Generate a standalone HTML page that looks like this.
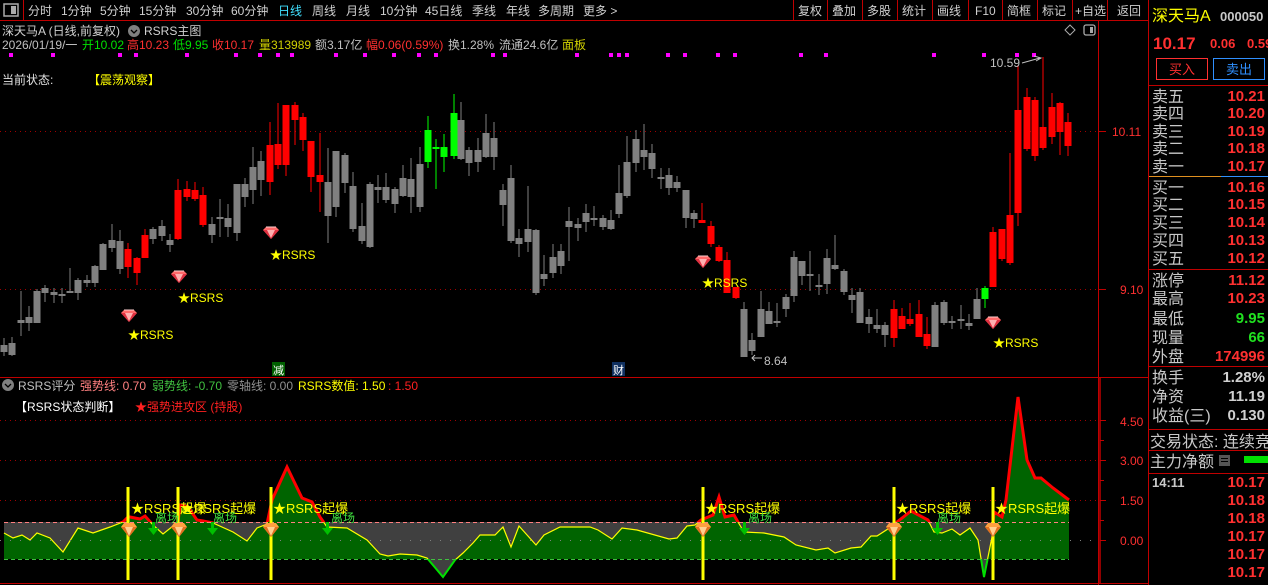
<!DOCTYPE html>
<html><head><meta charset="utf-8">
<style>
html,body{margin:0;padding:0;background:#000;width:1268px;height:585px;overflow:hidden}
svg{display:block}
text{font-family:"Liberation Sans","Noto Sans CJK SC",sans-serif}
</style></head><body>
<svg id="s" width="1268" height="585" xmlns="http://www.w3.org/2000/svg">
<defs>
<clipPath id="above"><rect x="0" y="0" width="1098" height="522"/></clipPath>
<clipPath id="mid"><rect x="0" y="522" width="1098" height="37"/></clipPath>
<clipPath id="aboveBase"><rect x="0" y="378" width="1098" height="181"/></clipPath>
<clipPath id="belowBase"><rect x="0" y="559" width="1098" height="30"/></clipPath>
<clipPath id="yel"><rect x="0" y="522" width="1098" height="63"/></clipPath>
<g id="gem"><polygon points="-8,-3 -5,-6 5,-6 8,-3 0,6" fill="#ff6a6a"/><polygon points="-8,-3 8,-3 0,6" fill="#e03040"/><polygon points="-4,-3 4,-3 0,5" fill="#ffb0b0"/><line x1="-5" y1="-6" x2="5" y2="-6" stroke="#ffd0d0"/></g>
<g id="gemo"><polygon points="-8,-3 -5,-7 5,-7 8,-3 0,7" fill="#ffa040"/><polygon points="-8,-3 8,-3 0,7" fill="#e07020"/><polygon points="-4,-3 4,-3 0,6" fill="#ffd090"/></g>
</defs>
<!-- frame lines -->
<line x1="0" y1="20.5" x2="1149" y2="20.5" stroke="#c00000"/>
<line x1="23.5" y1="0" x2="23.5" y2="20" stroke="#c00000"/>
<line x1="1098.5" y1="20" x2="1098.5" y2="585" stroke="#c00000"/>
<line x1="1148.5" y1="0" x2="1148.5" y2="585" stroke="#c00000"/>
<line x1="0" y1="377.5" x2="1148" y2="377.5" stroke="#c00000"/>
<line x1="0" y1="583.5" x2="1148" y2="583.5" stroke="#c00000"/>
<line x1="1100" y1="378" x2="1100" y2="583" stroke="#c00000" stroke-width="1.5"/>
<!-- toolbar -->
<rect x="4" y="4" width="14" height="12" fill="none" stroke="#aaa" stroke-width="1.5"/><rect x="11" y="6" width="5" height="8" fill="#aaa"/>
<g font-size="12" fill="#d0d0d0">
<text x="28" y="15">分时</text><text x="61" y="15">1分钟</text><text x="100" y="15">5分钟</text><text x="139" y="15">15分钟</text><text x="186" y="15">30分钟</text><text x="231" y="15">60分钟</text><text x="278" y="15" fill="#40e0ff">日线</text><text x="312" y="15">周线</text><text x="346" y="15">月线</text><text x="380" y="15">10分钟</text><text x="425" y="15">45日线</text><text x="472" y="15">季线</text><text x="506" y="15">年线</text><text x="538" y="15">多周期</text><text x="583" y="15">更多 &gt;</text>
<text x="798" y="15">复权</text><text x="832" y="15">叠加</text><text x="867" y="15">多股</text><text x="902" y="15">统计</text><text x="937" y="15">画线</text><text x="975" y="15">F10</text><text x="1007" y="15">简框</text><text x="1042" y="15">标记</text><text x="1075" y="15">+自选</text><text x="1117" y="15">返回</text>
</g>
<g stroke="#c00000"><line x1="793.5" y1="0" x2="793.5" y2="20"/><line x1="827.5" y1="0" x2="827.5" y2="20"/><line x1="862.5" y1="0" x2="862.5" y2="20"/><line x1="897.5" y1="0" x2="897.5" y2="20"/><line x1="932.5" y1="0" x2="932.5" y2="20"/><line x1="968.5" y1="0" x2="968.5" y2="20"/><line x1="1002.5" y1="0" x2="1002.5" y2="20"/><line x1="1037.5" y1="0" x2="1037.5" y2="20"/><line x1="1072.5" y1="0" x2="1072.5" y2="20"/><line x1="1107.5" y1="0" x2="1107.5" y2="20"/></g>
<!-- info lines -->
<g font-size="12">
<text x="2" y="35" fill="#d0d0d0">深天马A (日线,前复权)</text>
<circle cx="134" cy="31" r="6" fill="#808080"/><path d="M131 30 L134 33 L137 30" stroke="#000" stroke-width="1.3" fill="none"/>
<text x="144" y="35" fill="#d0d0d0">RSRS主图</text>
<text x="2" y="49" fill="#c0c0c0">2026/01/19/一</text>
<text x="82" y="49" fill="#00e000">开10.02</text>
<text x="127" y="49" fill="#ff3030">高10.23</text>
<text x="173" y="49" fill="#00e000">低9.95</text>
<text x="212" y="49" fill="#ff3030">收10.17</text>
<text x="259" y="49" fill="#d0d000">量313989</text>
<text x="315" y="49" fill="#c0c0c0">额3.17亿</text>
<text x="366" y="49" fill="#ff3030">幅0.06(0.59%)</text>
<text x="448" y="49" fill="#c0c0c0">换1.28%</text>
<text x="499" y="49" fill="#c0c0c0">流通24.6亿</text>
<text x="562" y="49" fill="#d0d000">面板</text>
<text x="2" y="84" fill="#e0e0e0">当前状态:</text>
<text x="88" y="84" fill="#ffff00">【震荡观察】</text>
</g>
<path d="M1070 25 L1075 30 L1070 35 L1065 30 Z" fill="none" stroke="#aaa"/>
<rect x="1084" y="25" width="11" height="10" rx="2" fill="none" stroke="#aaa" stroke-width="1.3"/><rect x="1090" y="27" width="3" height="6" fill="#aaa"/>
<!-- grid -->
<g stroke="#a00000" stroke-dasharray="1,4"><line x1="0" y1="131.5" x2="1098" y2="131.5"/><line x1="0" y1="289.5" x2="1098" y2="289.5"/>
<line x1="0" y1="420.5" x2="1098" y2="420.5"/><line x1="0" y1="460.5" x2="1098" y2="460.5"/><line x1="0" y1="500.5" x2="1098" y2="500.5"/></g>
<g font-size="12" fill="#ff3030">
<text x="1112" y="136">10.11</text><text x="1120" y="294">9.10</text>
<text x="1120" y="426">4.50</text><text x="1120" y="465">3.00</text><text x="1120" y="505">1.50</text><text x="1120" y="545">0.00</text>
</g>
<g stroke="#c00000"><line x1="1099" y1="131.5" x2="1106" y2="131.5"/><line x1="1099" y1="289.5" x2="1106" y2="289.5"/><line x1="1100" y1="420.5" x2="1106" y2="420.5"/><line x1="1100" y1="460.5" x2="1106" y2="460.5"/><line x1="1100" y1="500.5" x2="1106" y2="500.5"/><line x1="1100" y1="540.5" x2="1106" y2="540.5"/><line x1="1100" y1="440.5" x2="1104" y2="440.5"/><line x1="1100" y1="480.5" x2="1104" y2="480.5"/><line x1="1100" y1="520.5" x2="1104" y2="520.5"/></g>
<g id="candles"></g>
<g id="dots" fill="#ff00ff"></g>
<!-- labels main -->
<g font-size="12" fill="#c0c0c0"><text x="990" y="67">10.59</text><path d="M1022 63 L1040 58 M1034 56 L1041 58 L1036 61" stroke="#c0c0c0" fill="none"/>
<path d="M752 358 L762 358 M755 355 L752 358 L755 361" stroke="#c0c0c0" fill="none"/><text x="764" y="365">8.64</text></g>
<use href="#gem" x="129" y="316"/><use href="#gem" x="179" y="277"/><use href="#gem" x="271" y="233"/><use href="#gem" x="703" y="262"/><use href="#gem" x="993" y="323"/>
<g font-size="12" fill="#ffff00"><text x="128" y="339">★RSRS</text><text x="178" y="302">★RSRS</text><text x="270" y="259">★RSRS</text><text x="702" y="287">★RSRS</text><text x="993" y="347">★RSRS</text></g>
<rect x="272" y="362" width="13" height="14" fill="#006000"/><text x="273" y="374" font-size="11" fill="#fff">减</text>
<rect x="612" y="362" width="13" height="14" fill="#103060"/><text x="613" y="374" font-size="11" fill="#fff">财</text>
<!-- indicator header -->
<circle cx="8" cy="385" r="6" fill="#808080"/><path d="M5 384 L8 387 L11 384" stroke="#000" stroke-width="1.3" fill="none"/>
<g font-size="12"><text x="18" y="390" fill="#c0c0c0">RSRS评分</text><text x="80" y="390" fill="#ff8080">强势线: 0.70</text><text x="152" y="390" fill="#40c040">弱势线: -0.70</text><text x="227" y="390" fill="#909090">零轴线: 0.00</text><text x="298" y="390" fill="#ffff00">RSRS数值: 1.50</text><text x="388" y="390" fill="#ff2020">: 1.50</text>
<text x="15" y="411" fill="#fff">【RSRS状态判断】</text><text x="135" y="411" fill="#ff2020">★强势进攻区 (持股)</text></g>
<!-- indicator -->
<rect x="4" y="522" width="1065" height="37" fill="#404040"/>
<g id="ind"></g>
<line x1="4" y1="522.5" x2="1069" y2="522.5" stroke="#ff8080" stroke-dasharray="4,3"/>
<line x1="0" y1="540.5" x2="1098" y2="540.5" stroke="#808080" stroke-dasharray="1,9"/>
<line x1="4" y1="559.5" x2="1069" y2="559.5" stroke="#40c040" stroke-dasharray="4,3"/>
<g stroke="#ffff00" stroke-width="3"><line x1="128" y1="487" x2="128" y2="580"/><line x1="178" y1="487" x2="178" y2="580"/><line x1="271" y1="487" x2="271" y2="580"/><line x1="703" y1="487" x2="703" y2="580"/><line x1="894" y1="487" x2="894" y2="580"/><line x1="993" y1="487" x2="993" y2="580"/></g>
<use href="#gemo" x="129" y="530"/><use href="#gemo" x="179" y="530"/><use href="#gemo" x="271" y="530"/><use href="#gemo" x="703" y="530"/><use href="#gemo" x="894" y="530"/><use href="#gemo" x="993" y="530"/>
<g font-size="13" fill="#ffff00"><text x="131" y="513">★RSRS起爆</text><text x="181" y="513">★RSRS起爆</text><text x="273" y="513">★RSRS起爆</text><text x="705" y="513">★RSRS起爆</text><text x="896" y="513">★RSRS起爆</text><text x="995" y="513">★RSRS起爆</text></g>
<g font-size="12" fill="#40e040"><text x="155" y="522">离场</text><text x="213" y="522">离场</text><text x="331" y="522">离场</text><text x="748" y="522">离场</text><text x="937" y="522">离场</text></g>
<g fill="#00c000" id="arr"></g>
<!-- right panel -->
<text x="1152" y="21" font-size="16" fill="#ffff00">深天马A</text><text x="1220" y="21" font-size="13" fill="#c8c8c8" font-weight="bold">000050</text>
<text x="1153" y="49" font-size="17" fill="#ff3030" font-weight="bold">10.17</text><text x="1210" y="48" font-size="13" fill="#ff3030" font-weight="bold">0.06</text><text x="1247" y="48" font-size="13" fill="#ff3030" font-weight="bold">0.59</text>
<rect x="1156.5" y="58.5" width="51" height="21" fill="none" stroke="#ff3030"/><text x="1169" y="74" font-size="13" fill="#ff3030">买入</text>
<rect x="1213.5" y="58.5" width="51" height="21" fill="none" stroke="#3090ff"/><text x="1226" y="74" font-size="13" fill="#3090ff">卖出</text>
<g stroke="#c00000"><line x1="1149" y1="85.5" x2="1268" y2="85.5"/><line x1="1149" y1="269.5" x2="1268" y2="269.5"/><line x1="1149" y1="366.5" x2="1268" y2="366.5"/><line x1="1149" y1="429.5" x2="1268" y2="429.5"/><line x1="1149" y1="450.5" x2="1268" y2="450.5"/><line x1="1149" y1="473.5" x2="1268" y2="473.5"/></g>
<line x1="1149" y1="176.5" x2="1221" y2="176.5" stroke="#e09020"/><line x1="1221" y1="176.5" x2="1268" y2="176.5" stroke="#3090ff"/>
<g font-size="16" fill="#c8c8c8" id="rl"></g>
<g font-size="15" fill="#ff3030" font-weight="bold" text-anchor="end" id="rv"></g>
<text x="1150" y="447" font-size="16" fill="#c8c8c8">交易状态: 连续竞</text>
<text x="1150" y="467" font-size="16" fill="#c8c8c8">主力净额</text><rect x="1219" y="455" width="11" height="11" fill="#555"/><g stroke="#000"><line x1="1221" y1="458.5" x2="1228" y2="458.5"/><line x1="1221" y1="461.5" x2="1228" y2="461.5"/></g>
<rect x="1244" y="456" width="24" height="7" fill="#00e000"/>
<text x="1152" y="487" font-size="13" fill="#c8c8c8" font-weight="bold">14:11</text>
</svg>
<script>
var NS="http://www.w3.org/2000/svg";
function el(p,t,a){var e=document.createElementNS(NS,t);for(var k in a)e.setAttribute(k,a[k]);p.appendChild(e);return e;}
var C=[[4,345,352,338,356,'g'],[12,343,355,337,356,'g'],[21,320,323,291,336,'g'],[29,317,323,306,331,'g'],[37,291,323,289,323,'g'],[45,288,293,285,302,'g'],[54,292,295,288,303,'g'],[62,294,296,288,303,'g'],[70,291,293,268,293,'g'],[78,280,293,278,300,'g'],[87,280,283,275,287,'g'],[95,266,283,265,287,'g'],[103,244,270,243,270,'g'],[112,240,248,224,252,'g'],[120,241,269,230,274,'g'],[128,249,267,243,278,'r'],[137,258,273,257,285,'r'],[145,235,258,229,258,'r'],[153,229,239,227,244,'g'],[162,226,236,220,241,'g'],[170,240,245,234,252,'g'],[178,190,239,179,240,'r'],[187,189,197,181,201,'r'],[195,190,199,182,201,'r'],[203,195,225,187,227,'r'],[212,224,235,217,243,'g'],[220,217,219,199,237,'g'],[228,218,227,204,237,'g'],[237,184,233,184,241,'g'],[245,184,197,178,207,'g'],[253,167,190,147,204,'g'],[261,161,180,151,196,'g'],[270,145,182,122,195,'r'],[278,144,165,103,169,'r'],[286,105,165,105,176,'r'],[295,105,120,102,145,'r'],[303,117,140,113,151,'r'],[311,141,177,141,192,'r'],[320,175,182,133,212,'r'],[328,182,216,148,243,'g'],[336,151,207,151,217,'g'],[345,155,183,153,193,'g'],[353,186,229,172,232,'g'],[362,226,241,203,244,'g'],
[370,184,247,182,248,'g'],[378,187,190,175,203,'g'],[386,187,200,173,203,'g'],[395,189,204,187,213,'g'],[403,178,196,165,197,'g'],[411,179,197,158,213,'g'],[420,164,207,147,212,'g'],[428,130,162,116,168,'G'],[436,147,149,139,189,'G'],[444,147,157,134,172,'G'],[454,113,156,94,159,'G'],[461,120,159,102,160,'g'],[469,150,163,147,176,'g'],[478,150,162,138,172,'g'],[486,133,157,114,158,'g'],[494,138,157,122,170,'g'],[503,190,205,184,226,'g'],[511,178,241,165,243,'g'],[519,238,244,229,257,'g'],[528,229,242,186,252,'g'],[536,230,293,229,295,'g'],[544,274,279,255,286,'g'],[553,257,273,244,278,'g'],[561,251,266,244,274,'g'],[569,221,227,207,261,'g'],[578,224,228,218,241,'g'],[586,213,222,204,232,'g'],[594,218,220,206,226,'g'],[603,218,227,215,230,'g'],[611,220,229,210,230,'g'],[619,193,214,165,218,'g'],[627,162,196,136,198,'g'],[636,139,163,130,172,'g'],[644,150,157,124,170,'g'],[652,153,169,144,178,'g'],[661,177,179,168,189,'g'],[669,175,188,168,195,'g'],[677,182,188,176,192,'g'],[686,190,218,190,228,'g'],[694,213,219,210,228,'g'],[702,220,223,203,223,'r'],[711,226,244,221,247,'r'],[719,247,261,245,262,'r'],
[727,260,293,252,293,'r'],[736,287,298,287,299,'r'],[744,309,357,302,357,'g'],[752,340,351,333,355,'g'],[761,309,337,291,337,'g'],[769,311,324,302,324,'g'],[777,321,323,303,327,'g'],[786,297,309,294,317,'g'],[794,257,296,251,302,'g'],[802,261,276,261,285,'g'],[810,274,276,251,291,'g'],[819,285,287,274,295,'g'],[827,258,284,249,294,'g'],[835,265,269,235,270,'g'],[844,271,292,269,295,'g'],[852,295,300,288,313,'g'],[860,292,323,288,323,'g'],[869,317,324,309,333,'g'],[877,325,329,309,333,'g'],[885,325,335,322,347,'g'],[894,309,338,300,347,'r'],[902,316,329,308,329,'r'],[910,319,324,303,326,'r'],[919,314,337,300,337,'r'],[927,334,346,317,349,'r'],[935,305,347,302,347,'g'],[944,302,323,300,325,'g'],[952,321,323,316,329,'g'],[961,319,321,305,329,'g'],[969,323,326,314,330,'g'],[977,299,319,288,319,'g'],[985,288,299,286,308,'G'],[993,232,287,227,287,'r'],[1002,229,259,229,261,'r'],[1010,215,263,153,265,'r'],[1018,110,213,65,226,'r'],[1027,97,149,88,151,'r'],[1035,100,156,97,161,'r'],[1043,127,148,57,150,'r'],[1052,107,137,93,144,'r'],[1060,103,132,102,155,'r'],[1068,122,146,113,156,'r']];
var col={g:'#808080',r:'#ff0000',G:'#00ff00'};
var cg=document.getElementById('candles');
C.forEach(function(c){var f=col[c[5]];el(cg,'rect',{x:c[0]-0.5,y:c[3],width:1,height:c[4]-c[3],fill:f});var h=Math.max(1.5,c[2]-c[1]);el(cg,'rect',{x:c[0]-3.5,y:c[1],width:7,height:h,fill:f});});
var dg=document.getElementById('dots');
[11,53,120,136,187,236,260,278,292,336,365,394,419,436,493,505,577,611,619,627,668,685,718,735,801,826,934,984,1017,1034].forEach(function(x){el(dg,'rect',{x:x-2,y:53,width:4,height:4});});
var P=[[4,533],[13,538],[22,535],[30,540],[37,533],[50,538],[63,552],[78,528],[93,533],[110,527],[123,522],[128,517],[130,517],[140,519],[145,516],[153,525],[163,534],[178,522],[180,505],[188,507],[197,520],[203,521],[213,523],[233,532],[247,541],[257,528],[267,524],[272,500],[287,467],[302,498],[312,502],[320,517],[327,527],[347,528],[367,540],[380,554],[388,556],[400,554],[417,555],[427,558],[443,577],[455,560],[463,553],[473,543],[480,535],[495,535],[503,527],[511,547],[519,526],[536,545],[544,535],[560,527],[590,527],[598,530],[612,539],[622,528],[637,530],[669,539],[677,538],[687,526],[695,525],[701,520],[713,515],[719,497],[725,517],[734,515],[738,522],[744,532],[764,533],[784,537],[796,545],[816,550],[828,548],[835,553],[851,548],[861,547],[871,536],[877,536],[891,527],[897,522],[911,511],[928,520],[934,532],[942,533],[952,529],[960,535],[970,528],[978,540],[984,577],[992,537],[994,512],[1002,517],[1006,500],[1018,397],[1027,460],[1035,478],[1041,478],[1053,488],[1069,500]];
var pts=P.map(function(p){return p.join(',')}).join(' ');
var ig=document.getElementById('ind');
var poly='4,559 '+pts+' 1069,559';
el(ig,'polygon',{points:poly,fill:'#006400','clip-path':'url(#aboveBase)'});
el(ig,'polygon',{points:poly,fill:'#404040','clip-path':'url(#belowBase)'});
el(ig,'polyline',{points:pts,fill:'none',stroke:'#ffff00','stroke-width':1.2,'clip-path':'url(#yel)'});
el(ig,'polyline',{points:pts,fill:'none',stroke:'#00e000','stroke-width':2,'clip-path':'url(#belowBase)'});
el(ig,'polyline',{points:pts,fill:'none',stroke:'#ff0000','stroke-width':3,'clip-path':'url(#above)'});
var ag=document.getElementById('arr');
[153,212,327,744,937].forEach(function(x){el(ag,'rect',{x:x-1,y:522,width:3,height:7});el(ag,'polygon',{points:(x-5)+',528 '+(x+6)+',528 '+(x+0.5)+',535'});});
var rl=document.getElementById('rl'),rv=document.getElementById('rv');
var R=[['卖五','10.21',102],['卖四','10.20',119],['卖三','10.19',137],['卖二','10.18',154],['卖一','10.17',172],['买一','10.16',193],['买二','10.15',210],['买三','10.14',228],['买四','10.13',246],['买五','10.12',264],['涨停','11.12',286],['最高','10.23',304],['最低','9.95',324,'#20e020'],['现量','66',343,'#20e020'],['外盘','174996',362],['换手','1.28%',383,'#d0d0d0'],['净资','11.19',402,'#d0d0d0'],['收益(三)','0.130',421,'#d0d0d0']];
R.forEach(function(r){var t=el(rl,'text',{x:1152,y:r[2]});t.textContent=r[0];var v=el(rv,'text',{x:1265,y:r[2]-1});if(r[3])v.setAttribute('fill',r[3]);v.textContent=r[1];});
['10.17','10.18','10.18','10.17','10.17','10.17'].forEach(function(v,i){var t=el(rv,'text',{x:1265,y:487+i*18});t.textContent=v;});
</script>
</body></html>
